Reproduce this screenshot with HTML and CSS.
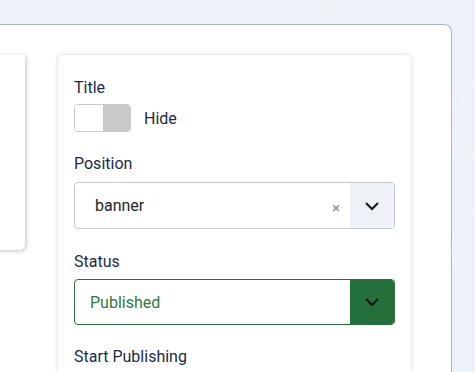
FILE: index.html
```html
<!DOCTYPE html>
<html lang="en">
<head>
    <meta charset="UTF-8">
    <meta name="viewport" content="width=device-width, initial-scale=1.0">
    <title>Module options</title>
    <link rel="stylesheet" href="styles.css">
</head>
<body>

    <div class="page">
        <div class="panel">
            <div class="side-card"></div>

            <div class="options-card">
                <div class="field field-title">
                    <label class="field-label">Title</label>
                    <div class="switch-row">
                        <span class="switch"><span class="switch-on"></span><span class="switch-off"></span></span>
                        <span class="switch-text">Hide</span>
                    </div>
                </div>

                <div class="field field-position">
                    <label class="field-label">Position</label>
                    <div class="choice">
                        <span class="choice-value">banner</span>
                        <span class="choice-clear">&times;</span>
                        <span class="choice-toggle">
                            <svg width="16" height="10" viewBox="0 0 16 10"><path d="M2 2l6 6 6-6" fill="none" stroke="#111" stroke-width="2"/></svg>
                        </span>
                    </div>
                </div>

                <div class="field field-status">
                    <label class="field-label">Status</label>
                    <div class="select select-published">
                        <span class="select-value">Published</span>
                        <span class="select-toggle">
                            <svg width="16" height="10" viewBox="0 0 16 10"><path d="M2 2l6 6 6-6" fill="none" stroke="#111" stroke-width="2"/></svg>
                        </span>
                    </div>
                </div>

                <div class="field">
                    <label class="field-label">Start Publishing</label>
                </div>
            </div>
        </div>
    </div>

</body>
</html>
```

FILE: styles.css
```css
body {
    margin: 0;
    background-color: #edf2f9;
    background-image:
        radial-gradient(circle at 60px -10px, transparent 38px, rgba(255, 255, 255, 0.3) 39px, transparent 41px),
        radial-gradient(circle at 290px -20px, transparent 45px, rgba(255, 255, 255, 0.3) 46px, transparent 48px),
        radial-gradient(circle at 500px 120px, transparent 40px, rgba(255, 255, 255, 0.3) 41px, transparent 43px),
        radial-gradient(circle at 495px 250px, transparent 42px, rgba(255, 255, 255, 0.3) 43px, transparent 45px);
    font-family: Roboto, 'Liberation Sans', sans-serif;
    color: #22262a;
    height: 372px;
    overflow: hidden;
}
.page {
    padding: 24px 23px 0 0;
}
.panel {
    margin-left: -20px;
    background: #fff;
    border: 1px solid #aab4c2;
    border-bottom: 0;
    border-radius: 8px 8px 0 0;
    padding: 30px 40px 0 0;
    height: 317px;
    display: grid;
    grid-template-columns: 44px 353px;
    column-gap: 33px;
    align-items: start;
}
.side-card {
    height: 195px;
    background: #fff;
    border-radius: 0 0 5px 0;
    box-shadow: 1px 1px 4px rgba(0, 0, 0, 0.25);
}
.options-card {
    background: #fff;
    border-radius: 5px 5px 0 0;
    box-shadow: 0 0 4px rgba(0, 0, 0, 0.18);
    padding: 21px 16px 0 16px;
    height: 296px;
    overflow: hidden;
}
.field-label {
    display: block;
    font-size: 16px;
    line-height: 24px;
    color: #1c2b42;
    margin-bottom: 6px;
}
.field-title .field-label {
    margin-bottom: 4px;
}
.field-title {
    margin-bottom: 20px;
}
.field-position {
    margin-bottom: 21px;
}
.field-status {
    margin-bottom: 20px;
}
.field-status .field-label {
    margin-bottom: 5px;
}
.switch-row {
    display: flex;
    align-items: center;
    gap: 13px;
}
.switch {
    display: flex;
    width: 55px;
    height: 26px;
    border: 1px solid #c8c8c8;
    border-radius: 4px;
    overflow: hidden;
}
.switch-on {
    flex: 1;
    background: #fff;
}
.switch-off {
    flex: 1;
    background: #c9c9c9;
}
.switch-text {
    font-size: 16px;
    color: #1c2b42;
}
.choice {
    display: flex;
    align-items: center;
    height: 45px;
    border: 1px solid #c4c9d0;
    border-radius: 4px;
    overflow: hidden;
}
.choice-value {
    flex: 1;
    padding-left: 20px;
    font-size: 16px;
    color: #22262a;
}
.choice-clear {
    width: 10px;
    color: #8a8a8a;
    font-size: 15px;
    margin-right: 8px;
    margin-top: 4px;
}
.choice-toggle {
    width: 44px;
    align-self: stretch;
    background: #eef2f8;
    display: flex;
    align-items: center;
    justify-content: center;
}
.select {
    display: flex;
    align-items: center;
    height: 44px;
    border-radius: 4px;
    overflow: hidden;
}
.select-published {
    border: 1px solid #2b6e37;
}
.select-value {
    flex: 1;
    padding-left: 15px;
    font-size: 16px;
    color: #2d7a39;
}
.select-toggle {
    width: 44px;
    align-self: stretch;
    background: #23703a;
    display: flex;
    align-items: center;
    justify-content: center;
}
```
